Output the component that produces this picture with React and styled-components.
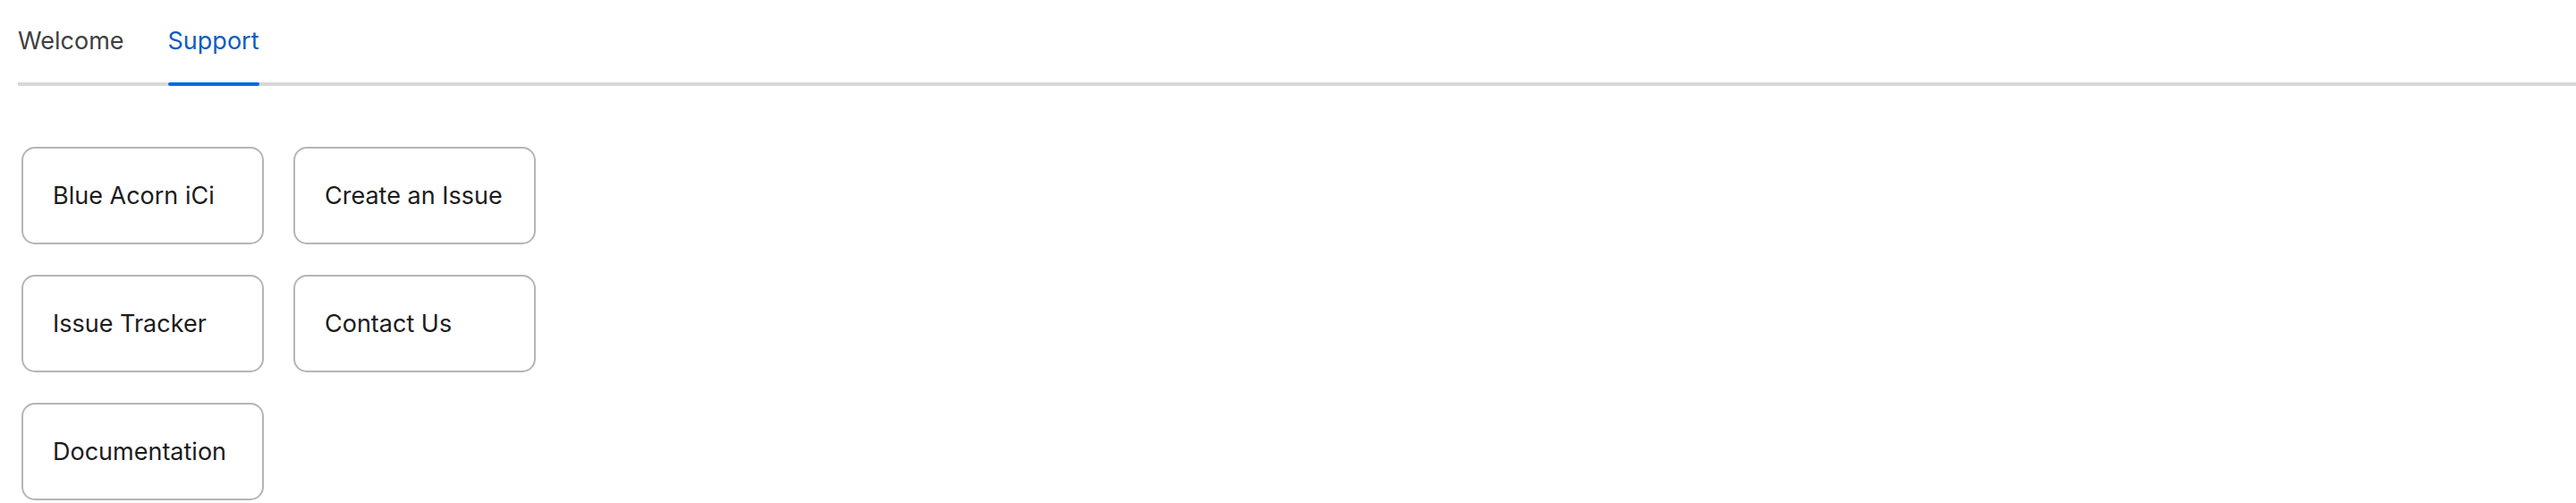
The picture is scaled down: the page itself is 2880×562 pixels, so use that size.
import React, { useState } from "react";
import styled, { createGlobalStyle } from "styled-components";

const Global = createGlobalStyle`
  html, body { margin: 0; padding: 0; background: #ffffff; }
  body { font-family: Inter, "Noto Sans", Arial, sans-serif; }
`;

const Page = styled.div`
  display: flex;
  flex-direction: column;
  padding: 0 0 0 20px;
`;

const TabBar = styled.div`
  display: flex;
  gap: 49px;
  padding-top: 29px;
  border-bottom: 4px solid #d8d8d8;
`;

const Tab = styled.button`
  position: relative;
  box-sizing: border-box;
  height: 63px;
  background: none;
  border: none;
  margin: 0;
  padding: 0 0 29px;
  font-family: inherit;
  font-size: 27px;
  line-height: 34px;
  color: ${(p) => (p.$active ? "#0b5cc4" : "#3f3f3f")};
  cursor: pointer;
  &::after {
    content: "";
    display: ${(p) => (p.$active ? "block" : "none")};
    position: absolute;
    left: 0;
    right: 0;
    bottom: -4px;
    height: 4px;
    border-radius: 2px;
    background: #0a6ae0;
  }
`;

const Grid = styled.div`
  display: grid;
  grid-template-columns: repeat(2, 271px);
  column-gap: 33px;
  row-gap: 34px;
  margin: 68px 0 0 4px;
`;

const LinkButton = styled.a`
  box-sizing: border-box;
  display: flex;
  align-items: center;
  height: 109px;
  padding: 0 0 0 33px;
  border: 2px solid #b5b5b5;
  border-radius: 15px;
  font-size: 27px;
  color: #1c1c1c;
  text-decoration: none;
  cursor: pointer;
`;

const links = [
  "Blue Acorn iCi",
  "Create an Issue",
  "Issue Tracker",
  "Contact Us",
  "Documentation",
];

export default function App() {
  const [tab, setTab] = useState("Support");
  return (
    <>
      <Global />
      <Page>
        <TabBar>
          {["Welcome", "Support"].map((t) => (
            <Tab key={t} $active={tab === t} onClick={() => setTab(t)}>
              {t}
            </Tab>
          ))}
        </TabBar>
        <Grid>
          {links.map((l) => (
            <LinkButton key={l}>{l}</LinkButton>
          ))}
        </Grid>
      </Page>
    </>
  );
}
